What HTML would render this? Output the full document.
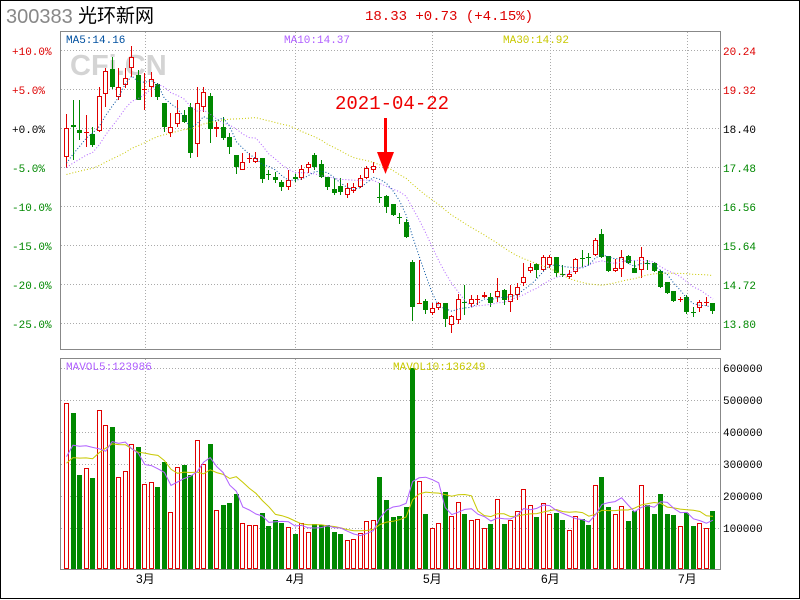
<!DOCTYPE html>
<html><head><meta charset="utf-8">
<style>
html,body{margin:0;padding:0;background:#fff;}
body{width:800px;height:600px;overflow:hidden;position:relative;}
svg{position:absolute;left:0;top:0;}
</style></head>
<body>
<svg id="s" width="800" height="600" xmlns="http://www.w3.org/2000/svg" font-family="'Liberation Mono','Noto Sans CJK SC',monospace">
<rect x="0.5" y="0.5" width="799" height="598" fill="#fff" stroke="#000"/>
<text x="6" y="23" font-family="'Liberation Sans',sans-serif" font-size="20" fill="#888">300383</text>
<text x="78" y="22" font-family="'Liberation Sans','Noto Sans CJK SC',sans-serif" font-size="19" fill="#000">光环新网</text>
<text x="365" y="20" font-size="14" fill="#d00">18.33 +0.73 (+4.15%)</text>
<text x="70" y="75" font-family="'Liberation Sans',sans-serif" font-weight="bold" font-size="29" fill="#d4d4d4">CFi.CN</text>
<g id="grid" stroke="#aaa" stroke-dasharray="1,2" stroke-width="1" shape-rendering="crispEdges"></g>
<rect x="60.5" y="31.5" width="660" height="318" fill="none" stroke="#888" shape-rendering="crispEdges"/>
<rect x="60.5" y="358.5" width="660" height="211" fill="none" stroke="#888" shape-rendering="crispEdges"/>
<g id="vol" shape-rendering="crispEdges"></g>
<g id="vma"></g>
<g id="cand" shape-rendering="crispEdges"></g>
<g id="ma"></g>
<g font-size="11">
<text x="66" y="43" fill="#0050a0">MA5:14.16</text>
<text x="284" y="43" fill="#b060ff">MA10:14.37</text>
<text x="503" y="43" fill="#c8c800">MA30:14.92</text>
<text x="66" y="370" fill="#b060ff">MAVOL5:123986</text>
<text x="393" y="370" fill="#c8c800">MAVOL10:136249</text>
</g>
<g font-size="11">
<text x="12" y="55" fill="#d00">+10.0%</text>
<text x="12" y="94" fill="#d00">+5.0%</text>
<text x="12" y="133" fill="#000">+0.0%</text>
<text x="12" y="172" fill="#080">-5.0%</text>
<text x="12" y="211" fill="#080">-10.0%</text>
<text x="12" y="250" fill="#080">-15.0%</text>
<text x="12" y="289" fill="#080">-20.0%</text>
<text x="12" y="328" fill="#080">-25.0%</text>
<text x="723" y="55" fill="#d00">20.24</text>
<text x="723" y="94" fill="#d00">19.32</text>
<text x="723" y="133" fill="#000">18.40</text>
<text x="723" y="172" fill="#080">17.48</text>
<text x="723" y="211" fill="#080">16.56</text>
<text x="723" y="250" fill="#080">15.64</text>
<text x="723" y="289" fill="#080">14.72</text>
<text x="723" y="328" fill="#080">13.80</text>
<text x="723" y="372" fill="#000">600000</text>
<text x="723" y="404" fill="#000">500000</text>
<text x="723" y="436" fill="#000">400000</text>
<text x="723" y="468" fill="#000">300000</text>
<text x="723" y="500" fill="#000">200000</text>
<text x="723" y="532" fill="#000">100000</text>
</g>
<g font-family="'Liberation Sans','Noto Sans CJK SC',sans-serif" font-size="12" fill="#000">
<text x="136" y="583">3月</text>
<text x="286" y="583">4月</text>
<text x="423" y="583">5月</text>
<text x="541" y="583">6月</text>
<text x="678" y="583">7月</text>
</g>
<text x="335" y="109" font-size="19" fill="#e00">2021-04-22</text>
<rect x="384" y="118" width="3" height="42" fill="#f00"/>
<polygon points="377,152 394,152 385.5,174" fill="#f00"/>
</svg>
<script>
var NS="http://www.w3.org/2000/svg";
function el(p,t,a){var e=document.createElementNS(NS,t);for(var k in a)e.setAttribute(k,a[k]);p.appendChild(e);return e;}
var g=document.getElementById('grid');
[50,89,128,167,206,245,284,323].forEach(function(y){el(g,'line',{x1:61,x2:720,y1:y+.5,y2:y+.5});});
[368,400,432,464,496,528].forEach(function(y){el(g,'line',{x1:61,x2:720,y1:y+.5,y2:y+.5});});
[145,295,432,550,687].forEach(function(x){el(g,'line',{x1:x+.5,x2:x+.5,y1:32,y2:349});el(g,'line',{x1:x+.5,x2:x+.5,y1:359,y2:569});});
var C=[
[128,157,114,168,1],[125,127,100,160,0],[130,133,100,140,0],[132,133,115,147,1],[134,145,127,147,0],
[96,131,87,132,1],[71,94,68,107,1],[69,87,57,89,0],[87,97,68,100,1],[78,85,68,88,1],
[57,68,46,77,1],[75,100,70,100,0],[89,90,73,110,1],[79,87,72,97,1],[84,97,83,100,0],
[103,127,103,132,0],[127,133,113,137,1],[113,124,100,127,1],[115,122,110,123,0],[107,153,103,158,0],
[103,144,87,157,1],[92,107,87,112,1],[96,129,93,143,0],[127,129,122,137,1],[127,138,117,140,0],
[137,147,133,154,0],[155,167,155,174,0],[162,170,153,170,1],[158,159,153,163,1],[158,162,152,163,1],
[158,179,158,183,0],[174,175,170,180,0],[177,180,172,183,0],[182,187,180,191,0],[180,187,170,190,1],
[177,179,174,182,0],[169,178,165,180,1],[164,168,162,173,1],[155,167,153,170,0],[164,177,160,178,0],
[177,187,177,190,0],[189,193,178,195,0],[186,192,178,195,0],[188,195,183,198,1],[187,191,183,193,1],
[178,187,175,188,1],[168,178,166,179,1],[166,170,162,173,1],[197,198,183,203,0],[196,207,195,213,0],
[204,215,204,216,0],[217,218,213,224,0],[222,237,219,238,0],[262,307,260,321,0],[303,304,260,304,1],
[301,310,299,314,0],[308,313,303,315,1],[303,308,302,310,1],[303,319,303,327,0],[316,325,315,333,1],
[299,320,294,324,1],[302,303,285,315,0],[299,304,295,307,1],[299,300,295,305,1],[295,297,292,298,1],
[297,303,293,307,0],[291,297,278,302,1],[290,300,289,305,0],[294,302,285,312,1],[287,295,283,300,1],
[277,283,263,286,1],[267,271,263,273,1],[264,270,263,278,0],[257,270,255,271,1],[257,265,255,268,1],
[257,273,257,277,0],[274,275,265,277,0],[274,277,270,279,1],[259,272,258,274,1],[258,259,250,267,0],
[257,258,253,265,0],[240,255,238,256,1],[234,257,229,258,0],[256,271,256,272,0],[268,271,259,272,1],
[257,269,250,277,1],[256,263,255,264,0],[268,273,260,273,0],[257,270,247,278,1],[263,264,260,270,0],
[263,271,262,272,0],[271,287,270,288,0],[282,293,282,294,0],[291,301,291,302,0],[299,300,297,302,1],
[297,312,295,314,0],[312,313,307,317,0],[302,308,300,312,1],[302,303,297,306,1],[303,311,303,314,0]];
var V=[403,413,475,468,478,410,425,427,477,471,444,447,484,482,487,462,512,467,465,475,440,464,444,510,505,503,494,523,525,525,513,526,520,523,527,534,523,532,524,525,525,532,534,540,539,533,521,520,477,500,517,516,507,368,481,514,528,523,492,516,502,514,520,519,528,524,499,524,520,511,489,505,517,503,514,513,520,530,516,519,525,485,477,507,514,506,521,511,485,505,514,494,514,515,526,513,526,523,528,511];
var cg=document.getElementById('cand'),vg=document.getElementById('vol');
function X(i){return 64+i*6.53;}
var closes=[];
for(var i=0;i<C.length;i++){
 var c=C[i],x=Math.round(X(i)),up=c[4];
 var col=up?'#e00000':'#008800';
 closes.push(up?c[0]:c[1]);
 var h=Math.max(1,c[1]-c[0]);
 if(up){
  el(cg,'rect',{x:x+2,y:c[2],width:1,height:c[0]-c[2],fill:col});
  el(cg,'rect',{x:x+2,y:c[1],width:1,height:Math.max(0,c[3]-c[1]),fill:col});
  if(h<=2){el(cg,'rect',{x:x,y:c[0],width:5,height:Math.max(1,h),fill:col});}
  else{
   el(cg,'rect',{x:x,y:c[0],width:5,height:h,fill:col});
   el(cg,'rect',{x:x+1,y:c[0]+1,width:3,height:h-2,fill:'#fff'});
  }
 } else {
  el(cg,'rect',{x:x+2,y:c[2],width:1,height:c[3]-c[2],fill:col});
  el(cg,'rect',{x:x,y:c[0],width:5,height:h,fill:col});
 }
 var vt=V[i];
 if(up){el(vg,'rect',{x:x,y:vt,width:5,height:569-vt,fill:'#e00000'});el(vg,'rect',{x:x+1,y:vt+1,width:3,height:569-vt-2,fill:'#fff'});}
 else el(vg,'rect',{x:x,y:vt,width:5,height:569-vt,fill:'#008800'});
}
function ma(arr,n,pre){var a=pre.concat(arr),out=[];for(var i=pre.length;i<a.length;i++){var s=0;for(var j=i-n+1;j<=i;j++)s+=a[j];out.push(s/n);}return out;}
var pre=[];for(var k=0;k<29;k++)pre.push(168+ (k<15?12:4));
var mg=document.getElementById('ma');
function line(g,arr,col,dash){var p=arr.map(function(v,i){return (X(i)+2.5).toFixed(1)+','+v.toFixed(1);}).join(' ');el(g,'polyline',{points:p,fill:'none',stroke:col,'stroke-width':1,'stroke-dasharray':dash||'none'});}
line(mg,ma(closes,30,pre),'#c8c800','1,2');
line(mg,ma(closes,10,pre),'#b060ff','1,2');
line(mg,ma(closes,5,pre),'#0050a0','1,2');
var vpre=[];for(var k=0;k<10;k++)vpre.push(470);
var vm=document.getElementById('vma');
line(vm,ma(V,10,vpre),'#c8c800');
line(vm,ma(V,5,vpre),'#b060ff');
</script>
</body></html>
